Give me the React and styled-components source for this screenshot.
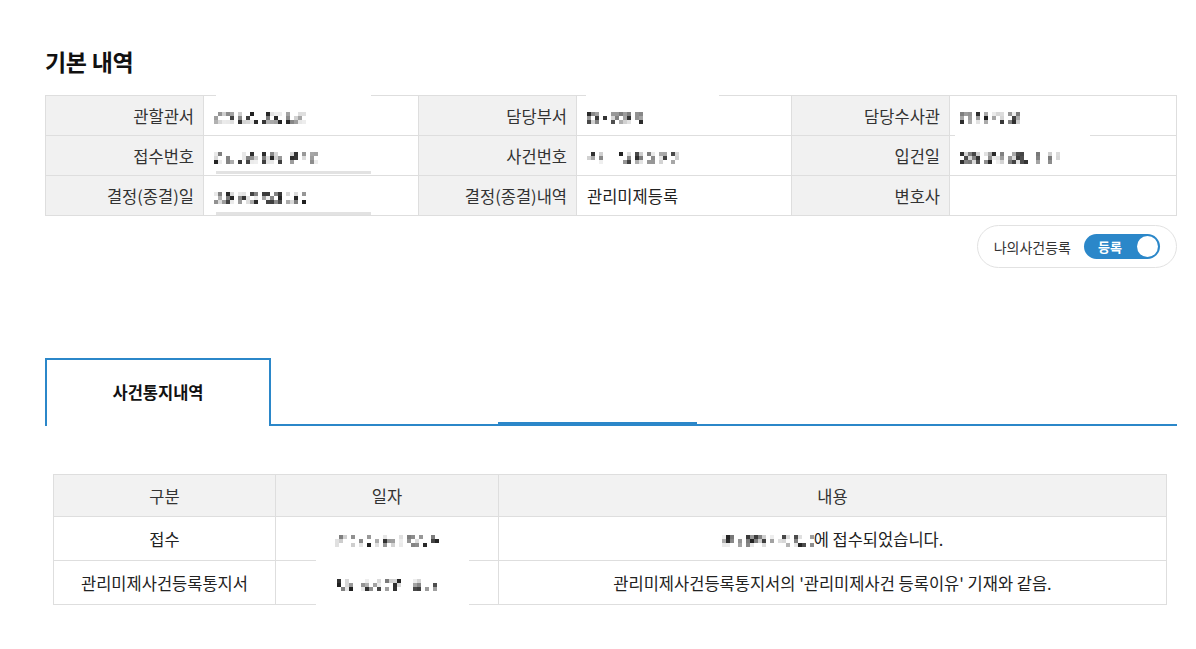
import styled, { createGlobalStyle } from "styled-components";

const GlobalStyle = createGlobalStyle`
  body {
    margin: 0;
    background: #fff;
    font-family: "Noto Sans CJK KR", "Noto Sans", sans-serif;
    color: #222;
  }
`;

const BLUE = "#2b87c9";
const LINE = "#dedede";

const Page = styled.div`
  padding: 46px 19px 40px 45px;
`;

const Title = styled.h2`
  margin: 0 0 19px 0;
  font-size: 23px;
  line-height: 30px;
  font-weight: 700;
  color: #111;
  letter-spacing: -0.3px;
`;

const InfoTable = styled.table`
  width: 100%;
  border-collapse: collapse;
  table-layout: fixed;
`;

const Label = styled.th`
  height: 39px;
  padding: 0 9px 0 0;
  background: #f1f1f1;
  border: 1px solid ${LINE};
  text-align: right;
  font-size: 16.5px;
  font-weight: 400;
  color: #333;
`;

const Value = styled.td`
  position: relative;
  height: 39px;
  padding: 0 10px;
  border: 1px solid ${LINE};
  font-size: 16.5px;
  color: #222;
`;

const Patch = styled.span`
  position: absolute;
  left: ${(p) => p.$left}px;
  top: ${(p) => p.$top}px;
  width: ${(p) => p.$width}px;
  height: ${(p) => p.$height}px;
  background: #fff;
  border-bottom: ${(p) => (p.$bar ? "3px solid #e2e2e2" : "none")};
  box-sizing: border-box;
`;

const MosaicGrid = styled.span`
  position: relative;
  display: inline-grid;
  grid-auto-flow: column;
  grid-template-rows: repeat(3, 4px);
  grid-auto-columns: 4px;
  vertical-align: middle;
`;

const Cell = styled.span`
  display: block;
`;

function Mosaic({ width, seed }) {
  const cols = Math.round(width / 4);
  let s = seed * 9301 + 49297;
  const rnd = () => {
    s = (s * 9301 + 49297) % 233280;
    return s / 233280;
  };
  const cells = [];
  for (let c = 0; c < cols; c++) {
    const gap = c % 6 === 5 || rnd() < 0.15;
    for (let r = 0; r < 3; r++) {
      let v = 255;
      if (!gap) {
        const x = rnd();
        if (x < 0.22) v = 30 + Math.floor(rnd() * 50);
        else if (x < 0.5) v = 120 + Math.floor(rnd() * 60);
        else if (x < 0.75) v = 205 + Math.floor(rnd() * 35);
      }
      cells.push(<Cell key={c * 3 + r} style={{ background: `rgb(${v},${v},${v})` }} />);
    }
  }
  return <MosaicGrid>{cells}</MosaicGrid>;
}

const ToggleRow = styled.div`
  display: flex;
  justify-content: flex-end;
  margin-top: 9px;
`;

const TogglePill = styled.div`
  display: flex;
  align-items: center;
  gap: 13px;
  height: 43px;
  box-sizing: border-box;
  padding: 0 16px 0 16px;
  border: 1px solid #e2e2e2;
  border-radius: 22px;
  font-size: 14px;
  color: #333;
`;

const Switch = styled.button`
  display: flex;
  align-items: center;
  justify-content: space-between;
  width: 76px;
  height: 25px;
  padding: 0 2px 0 14px;
  border: none;
  border-radius: 13px;
  background: ${BLUE};
  color: #fff;
  font-family: inherit;
  font-size: 13px;
  font-weight: 700;
  cursor: pointer;
`;

const Knob = styled.span`
  width: 21px;
  height: 21px;
  border-radius: 50%;
  background: #fff;
`;

const TabBar = styled.div`
  display: flex;
  align-items: flex-end;
  margin-top: 90px;
`;

const Tab = styled.div`
  display: flex;
  align-items: center;
  justify-content: center;
  width: 226px;
  height: 68px;
  box-sizing: border-box;
  padding-bottom: 2px;
  border: 2px solid ${BLUE};
  border-bottom: none;
  font-size: 16.5px;
  font-weight: 700;
  color: #111;
`;

const TabRest = styled.div`
  flex: 1;
  display: flex;
  align-items: flex-end;
  height: 4px;
  border-bottom: 2px solid ${BLUE};
`;

const Indicator = styled.span`
  display: block;
  width: 199px;
  height: 2px;
  margin-left: 227px;
  background: ${BLUE};
`;

const ListTable = styled.table`
  width: calc(100% - 18px);
  margin: 48px 0 0 8px;
  border-collapse: collapse;
  table-layout: fixed;
`;

const Head = styled.th`
  height: 41px;
  padding: 0;
  background: #f2f2f2;
  border: 1px solid ${LINE};
  font-size: 16.5px;
  font-weight: 400;
  color: #333;
`;

const Data = styled.td`
  position: relative;
  height: 43px;
  padding: 0;
  border: 1px solid ${LINE};
  text-align: center;
  font-size: 16.5px;
  color: #222;
`;

export default function App() {
  return (
    <>
      <GlobalStyle />
      <Page>
        <Title>기본 내역</Title>
        <InfoTable>
          <colgroup>
            <col style={{ width: 158 }} />
            <col style={{ width: 215 }} />
            <col style={{ width: 158 }} />
            <col style={{ width: 215 }} />
            <col style={{ width: 158 }} />
            <col />
          </colgroup>
          <tbody>
            <tr>
              <Label>관할관서</Label>
              <Value>
                <Patch $left={12} $top={-2} $width={155} $height={41} />
                <Mosaic width={90} seed={3} />
              </Value>
              <Label>담당부서</Label>
              <Value>
                <Patch $left={9} $top={-2} $width={133} $height={41} />
                <Mosaic width={56} seed={7} />
              </Value>
              <Label>담당수사관</Label>
              <Value>
                <Patch $left={5} $top={4} $width={135} $height={38} />
                <Mosaic width={60} seed={11} />
              </Value>
            </tr>
            <tr>
              <Label>접수번호</Label>
              <Value>
                <Patch $left={12} $top={4} $width={155} $height={34} $bar />
                <Mosaic width={104} seed={5} />
              </Value>
              <Label>사건번호</Label>
              <Value>
                <Mosaic width={100} seed={13} />
              </Value>
              <Label>입건일</Label>
              <Value>
                <Mosaic width={100} seed={17} />
              </Value>
            </tr>
            <tr>
              <Label>결정(종결)일</Label>
              <Value>
                <Patch $left={12} $top={4} $width={155} $height={35} $bar />
                <Mosaic width={96} seed={19} />
              </Value>
              <Label>결정(종결)내역</Label>
              <Value>관리미제등록</Value>
              <Label>변호사</Label>
              <Value />
            </tr>
          </tbody>
        </InfoTable>

        <ToggleRow>
          <TogglePill>
            나의사건등록
            <Switch type="button">
              등록
              <Knob />
            </Switch>
          </TogglePill>
        </ToggleRow>

        <TabBar>
          <Tab>사건통지내역</Tab>
          <TabRest>
            <Indicator />
          </TabRest>
        </TabBar>

        <ListTable>
          <colgroup>
            <col style={{ width: 222 }} />
            <col style={{ width: 223 }} />
            <col />
          </colgroup>
          <thead>
            <tr>
              <Head>구분</Head>
              <Head>일자</Head>
              <Head>내용</Head>
            </tr>
          </thead>
          <tbody>
            <tr>
              <Data>접수</Data>
              <Data>
                <Mosaic width={102} seed={23} />
              </Data>
              <Data>
                <Mosaic width={92} seed={29} />에 접수되었습니다.
              </Data>
            </tr>
            <tr>
              <Data>관리미제사건등록통지서</Data>
              <Data>
                <Patch $left={40} $top={-2} $width={153} $height={48} />
                <Mosaic width={98} seed={31} />
              </Data>
              <Data>관리미제사건등록통지서의 '관리미제사건 등록이유' 기재와 같음.</Data>
            </tr>
          </tbody>
        </ListTable>
      </Page>
    </>
  );
}
